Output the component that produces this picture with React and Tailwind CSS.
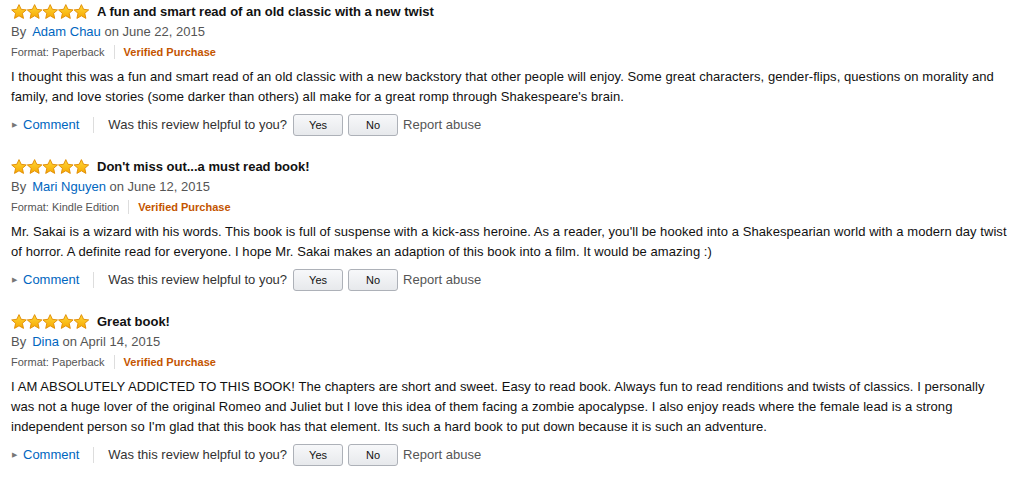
const REVIEWS = [
  {
    id: 1,
    title: "A fun and smart read of an old classic with a new twist",
    author: "Adam Chau",
    date: "June 22, 2015",
    format: "Paperback",
    body: "I thought this was a fun and smart read of an old classic with a new backstory that other people will enjoy. Some great characters, gender-flips, questions on morality and family, and love stories (some darker than others) all make for a great romp through Shakespeare's brain.",
  },
  {
    id: 2,
    title: "Don't miss out...a must read book!",
    author: "Mari Nguyen",
    date: "June 12, 2015",
    format: "Kindle Edition",
    body: "Mr. Sakai is a wizard with his words. This book is full of suspense with a kick-ass heroine. As a reader, you'll be hooked into a Shakespearian world with a modern day twist of horror. A definite read for everyone. I hope Mr. Sakai makes an adaption of this book into a film. It would be amazing :)",
  },
  {
    id: 3,
    title: "Great book!",
    author: "Dina",
    date: "April 14, 2015",
    format: "Paperback",
    body: "I AM ABSOLUTELY ADDICTED TO THIS BOOK! The chapters are short and sweet. Easy to read book. Always fun to read renditions and twists of classics. I personally was not a huge lover of the original Romeo and Juliet but I love this idea of them facing a zombie apocalypse. I also enjoy reads where the female lead is a strong independent person so I'm glad that this book has that element. Its such a hard book to put down because it is such an adventure.",
  },
];

function Stars({ id }) {
  const star = "M8 0.6 L10.2 5.3 L15.3 5.9 L11.4 9.3 L12.5 14.4 L8 11.8 L3.5 14.4 L4.6 9.3 L0.7 5.9 L5.8 5.3 Z";
  return (
    <svg width="80" height="16" viewBox="0 0 80 16" className="shrink-0">
      <defs>
        <linearGradient id={`sg${id}`} x1="0" y1="0" x2="0" y2="1">
          <stop offset="0" stopColor="#ffd83a" />
          <stop offset="1" stopColor="#f6a800" />
        </linearGradient>
      </defs>
      {[0, 1, 2, 3, 4].map((i) => (
        <path
          key={i}
          d={star}
          transform={`translate(${i * 15.6} 0)`}
          fill={`url(#sg${id})`}
          stroke="#e08a00"
          strokeWidth="0.9"
          strokeLinejoin="round"
        />
      ))}
    </svg>
  );
}

function VoteButton({ children }) {
  return (
    <button
      type="button"
      className="h-[22px] w-[50px] rounded-[3px] border border-[#adb1b8] bg-gradient-to-b from-[#f7f8fa] to-[#e7e9ec] text-[11px] text-[#111]"
    >
      {children}
    </button>
  );
}

function Review({ review }) {
  return (
    <div className="mb-[21px]">
      <div className="flex h-[20px] items-center gap-[6px]">
        <Stars id={review.id} />
        <span className="text-[13px] font-bold text-[#111]">{review.title}</span>
      </div>
      <div className="flex h-[20px] items-center text-[13px] text-[#555]">
        By<span className="ml-[6px] text-[#0066c0]">{review.author}</span>&nbsp;on {review.date}
      </div>
      <div className="flex h-[20px] items-center text-[11px] text-[#555]">
        <span>Format: {review.format}</span>
        <span className="mx-[9px] h-[14px] w-px bg-[#ddd]" />
        <span className="font-bold text-[#c45500]">Verified Purchase</span>
      </div>
      <p className="mt-[5px] text-[13px] leading-[20px] tracking-[0.07px] text-[#111]">{review.body}</p>
      <div className="mt-[7px] flex h-[22px] items-center text-[13px]">
        <span className="ml-px mr-[6px] text-[7px] text-[#777]">▶</span>
        <span className="text-[#0066c0]">Comment</span>
        <span className="mx-[14px] h-[16px] w-px bg-[#ddd]" />
        <span className="mr-[6px] text-[#333]">Was this review helpful to you?</span>
        <div className="flex gap-[5px]">
          <VoteButton>Yes</VoteButton>
          <VoteButton>No</VoteButton>
        </div>
        <span className="ml-[5px] text-[#555]">Report abuse</span>
      </div>
    </div>
  );
}

export default function App() {
  return (
    <div
      className="min-h-[492px] bg-white pl-[11px] pr-[2px] pt-[2px]"
      style={{ fontFamily: '"Liberation Sans", Arial, sans-serif' }}
    >
      {REVIEWS.map((review) => (
        <Review key={review.id} review={review} />
      ))}
    </div>
  );
}
